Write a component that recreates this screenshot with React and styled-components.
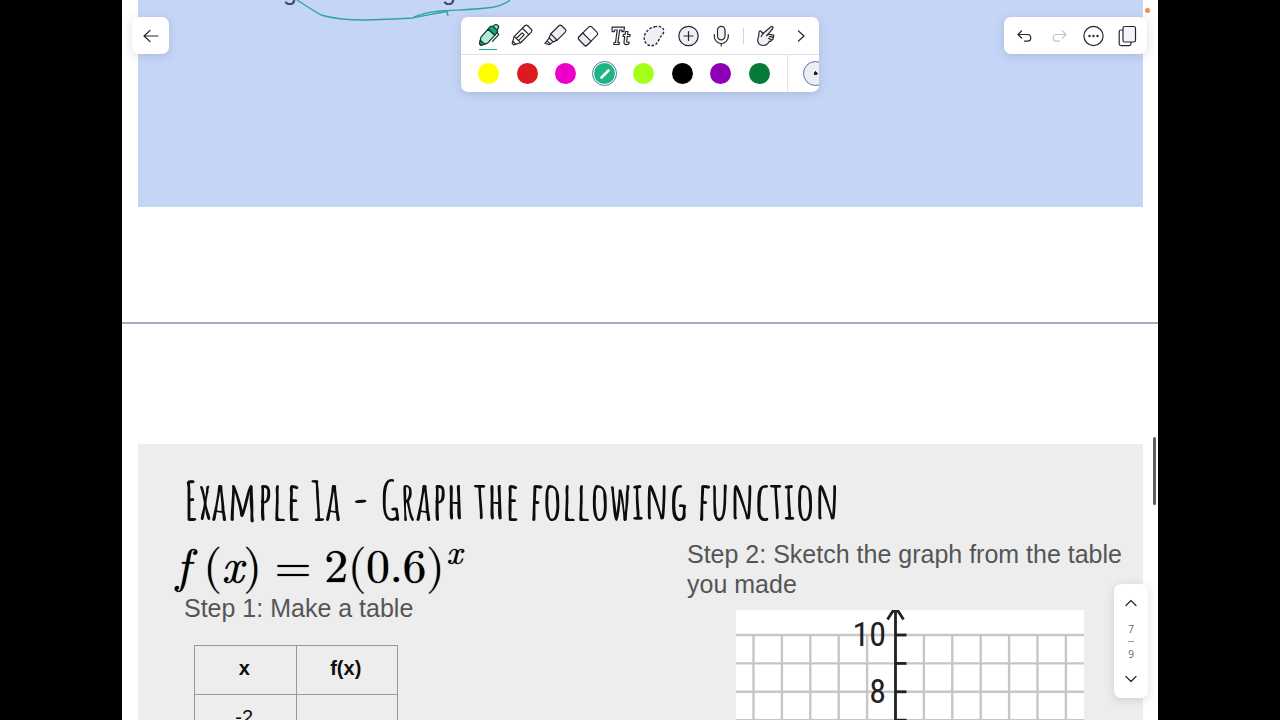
import styled, { createGlobalStyle, css } from "styled-components";

const swatches = [
  { name: "Yellow", color: "#ffff00" },
  { name: "Red", color: "#dc1a1f" },
  { name: "Magenta", color: "#ec00c8" },
  { name: "Teal", color: "#1fb485", selected: true },
  { name: "Lime", color: "#a4ff1a" },
  { name: "Black", color: "#000000" },
  { name: "Purple", color: "#8e00b8" },
  { name: "Green", color: "#067a36" },
];

const tools = [
  { name: "Pen", Icon: PenIcon, active: true },
  { name: "Pencil", Icon: PencilIcon },
  { name: "Highlighter", Icon: HighlighterIcon },
  { name: "Eraser", Icon: EraserIcon },
  { name: "Text", Icon: TextIcon },
  { name: "Lasso", Icon: LassoIcon },
  { name: "Add", Icon: AddIcon },
  { name: "Record", Icon: MicIcon },
];

export default function App() {
  return (
    <>
      <GlobalStyle />
      <Screen>
        <Stage>
          <PreviousSlide>
            <CutLine>
              <span>g</span>
              <span>g</span>
            </CutLine>
            <InkStroke />
          </PreviousSlide>
          <PageBreak />
          <ExampleSlide />
          <Toolbar />
          <BackButton type="button" aria-label="Back">
            <Icon>
              <path d="M19 12H5M11 6.500 5 12l6 5.500" />
            </Icon>
          </BackButton>
          <Actions />
          <Pager />
          <RecordingDot />
          <ScrollThumb />
        </Stage>
      </Screen>
    </>
  );
}

function ExampleSlide() {
  return (
    <Slide>
      <Title>Example 1a - Graph the following function</Title>
      <Columns>
        <div>
          <Formula>
            <i>f</i>
            <Group>
              <span>(</span>
              <i>x</i>
              <span>)</span>
            </Group>
            <span>=</span>
            <Group>
              <span>2(0.6)</span>
              <sup>x</sup>
            </Group>
          </Formula>
          <Step>Step 1: Make a table</Step>
          <ValueTable>
            <thead>
              <tr>
                <th>x</th>
                <th>f(x)</th>
              </tr>
            </thead>
            <tbody>
              <tr>
                <td>-2</td>
                <td></td>
              </tr>
            </tbody>
          </ValueTable>
        </div>
        <GraphColumn>
          <Step>Step 2: Sketch the graph from the table you made</Step>
          <Grid />
        </GraphColumn>
      </Columns>
    </Slide>
  );
}

function Grid() {
  const columns = [-5, -4, -3, -2, -1, 1, 2, 3, 4, 5, 6];
  const rows = [0, 1, 2, 3];
  const unit = 28.4;
  return (
    <Plot width="348" height="124" viewBox="0 0 348 124">
      <rect width="348" height="124" fill="#fff" />
      <g stroke="#c6c6c6" strokeWidth="2.4">
        {columns.map((c) => (
          <path key={c} d={`M${159.5 + c * unit} 25V124`} />
        ))}
        {rows.map((r) => (
          <path key={r} d={`M0 ${25 + r * unit}H348`} />
        ))}
      </g>
      <g stroke="#222" strokeWidth="2.8" fill="none">
        <path d="M159.5 1V124M151.500 9.500l3.500-5.500 2-3h5l2 3 3.500 5.500" />
        {rows.map((r) => (
          <path key={r} d={`M159.5 ${25 + r * unit}h11`} />
        ))}
      </g>
      <text x="150" y="36" textAnchor="end">
        10
      </text>
      <text x="150" y="93" textAnchor="end">
        8
      </text>
    </Plot>
  );
}

function Toolbar() {
  return (
    <ToolPanel>
      <ToolRow>
        <ToolGroup>
          {tools.map(({ name, Icon: ToolIcon, active }) => (
            <ToolButton key={name} type="button" aria-label={name} $active={active}>
              <ToolIcon />
            </ToolButton>
          ))}
        </ToolGroup>
        <Separator />
        <ToolButton type="button" aria-label="Gesture">
          <HandIcon />
        </ToolButton>
        <ToolButton type="button" aria-label="More tools">
          <Icon>
            <path d="M9.500 7 15 12l-5.500 5" />
          </Icon>
        </ToolButton>
      </ToolRow>
      <ColorRow>
        <ToolGroup>
          {swatches.map(({ name, color, selected }) => (
            <Swatch key={name} type="button" aria-label={name} $color={color} $selected={selected}>
              {selected && (
                <svg width="12" height="12" viewBox="0 0 12 12">
                  <path d="M2.500 9.500 9.500 2.500" stroke="#fff" strokeWidth="2.600" strokeLinecap="round" />
                </svg>
              )}
            </Swatch>
          ))}
        </ToolGroup>
        <SizeSlot>
          <SizeButton type="button" aria-label="Stroke size" />
        </SizeSlot>
      </ColorRow>
    </ToolPanel>
  );
}

function Actions() {
  return (
    <ActionPanel>
      <ToolButton type="button" aria-label="Undo">
        <Icon>
          <path d="M8.500 7 5 10.500l3.500 3.500M5.500 10.500H14.500a3.300 3.300 0 0 1 0 6.600h-3" />
        </Icon>
      </ToolButton>
      <ToolButton type="button" aria-label="Redo" disabled>
        <Icon stroke="#c4c4c6">
          <path d="M15.500 7l3.500 3.500-3.500 3.500M18.500 10.500H9.500a3.300 3.300 0 0 0 0 6.600h3" />
        </Icon>
      </ToolButton>
      <ToolButton type="button" aria-label="More">
        <Icon>
          <circle cx="12.500" cy="12" r="9.600" />
          <g fill="#222" stroke="none">
            <circle cx="8.500" cy="12" r="1.200" />
            <circle cx="12.500" cy="12" r="1.200" />
            <circle cx="16.500" cy="12" r="1.200" />
          </g>
        </Icon>
      </ToolButton>
      <ToolButton type="button" aria-label="Pages">
        <Icon>
          <path d="M8 6H6a1.800 1.800 0 0 0-1.800 1.800v12A1.800 1.800 0 0 0 6 21.600h8.200a1.800 1.800 0 0 0 1.800-1.800V18" />
          <rect x="8" y="2.500" width="12.500" height="15.500" rx="1.800" fill="#f4f5f8" />
        </Icon>
      </ToolButton>
    </ActionPanel>
  );
}

function Pager() {
  return (
    <PagerPanel>
      <ToolButton type="button" aria-label="Previous page">
        <Icon>
          <path d="M7 14.500 12 9.500l5 5" />
        </Icon>
      </ToolButton>
      <PageCount>
        <span>7</span>
        <PageRule />
        <span>9</span>
      </PageCount>
      <ToolButton type="button" aria-label="Next page">
        <Icon>
          <path d="M7 9.500 12 14.500l5-5" />
        </Icon>
      </ToolButton>
    </PagerPanel>
  );
}

function InkStroke() {
  return (
    <Ink width="230" height="24" viewBox="290 0 230 24">
      <path d="M297 0C305 5 312 10 321 15C334 19 350 20 365 20C385 19.500 400 19 412 18C425 16 436 13 447 11.500L448 16" />
      <path d="M414 17C424 13 436 10.500 449 10.500C468 9.500 483 9 494 7C502 5 507 3 510 0" />
    </Ink>
  );
}

function Icon({ children, stroke = "#26282c" }) {
  return (
    <svg
      width="24"
      height="24"
      viewBox="0 0 24 24"
      fill="none"
      stroke={stroke}
      strokeWidth="1.200"
      strokeLinecap="round"
      strokeLinejoin="round"
      overflow="visible"
    >
      {children}
    </svg>
  );
}

function PenIcon() {
  return (
    <Icon stroke="#0d3b2c">
      <g transform="rotate(42 12 12)">
        <path d="M9.500 1.500V0a2.500 2.500 0 0 1 5 0v1.500" fill="#8fdcc0" />
        <path d="M7.500 7V3.500a2 2 0 0 1 2-2h5a2 2 0 0 1 2 2V7z" fill="#1ea377" />
        <path d="M7.500 7h9v10.500l-3.500 6h-2l-3.500-6z" fill="#b5ead5" />
        <path d="M9 20.200h6L13 23.500h-2z" fill="#1ea377" />
        <path d="M16.500 3.500H19V13" />
      </g>
    </Icon>
  );
}

function PencilIcon() {
  return (
    <Icon>
      <g transform="rotate(45 12 12)">
        <path d="M7.500 17V2a2 2 0 0 1 2-2h5a2 2 0 0 1 2 2v15L13 23.500h-2z" fill="#fff" />
        <path d="M7.500 5.500h9M7.500 17h9M10.500 9v8M13.500 9v8M10.500 9h3M10 21.500h4" />
      </g>
    </Icon>
  );
}

function HighlighterIcon() {
  return (
    <Icon>
      <g transform="rotate(45 12 12)">
        <path d="M7.500 13V2a2 2 0 0 1 2-2h5a2 2 0 0 1 2 2v11l-1.500 4.500H9z" fill="#eef0f5" />
        <path d="M7.500 13.500h9M9.500 17.500V21h5v-3.500M10 21v3.200l4-2V21" />
      </g>
    </Icon>
  );
}

function EraserIcon() {
  return (
    <Icon>
      <g transform="rotate(45 12 12)">
        <rect x="6.200" y="3" width="11.600" height="18" rx="2" fill="#fff" />
        <path d="M6.200 13.500h11.600V19a2 2 0 0 1-2 2H8.200a2 2 0 0 1-2-2z" fill="#e9ebf2" />
      </g>
    </Icon>
  );
}

function TextIcon() {
  return (
    <Icon>
      <path
        d="M3 3.200h12.500l-.7 4.500h-2l.2-1.700h-2.300L8.900 18.500h1.500l-.3 2H4.800l.3-2h1.400L8.200 6H5.700L5.200 7.700h-2z"
        fill="#f4f5f8"
      />
      <path
        d="M16.500 7.500H19l-.4 3h2.500l-.3 2h-2.500l-.6 4.800c-.1.900.7 1.200 2.400.7l-.2 2c-3 1.300-5.200.3-4.900-2l.7-5.500H14l.3-2h1.800z"
        fill="#f4f5f8"
      />
    </Icon>
  );
}

function LassoIcon() {
  return (
    <Icon>
      <path
        d="M12.500 2.800C17 1.500 21.800 3 21.800 7c0 3.500-3.500 4.800-4.800 8.500-1.200 3.500-3.500 6.200-7.500 6.200-4.500 0-7.500-3.500-7.300-8.200.2-5 5-9.500 10.300-10.700z"
        fill="#eef0f5"
        strokeDasharray="2.600 1.600"
        strokeLinecap="butt"
        strokeWidth="1.400"
      />
    </Icon>
  );
}

function AddIcon() {
  return (
    <Icon>
      <circle cx="12.500" cy="12" r="9.700" fill="#eef0f5" />
      <path d="M12.500 7.500v9M8 12h9" />
    </Icon>
  );
}

function MicIcon() {
  return (
    <Icon>
      <rect x="8.500" y="2.300" width="7.500" height="13.500" rx="3.700" fill="#eef0f5" />
      <path d="M5.300 10.500v2a7 7 0 0 0 14 0v-2M12.300 19.500v2.500" />
    </Icon>
  );
}

function HandIcon() {
  return (
    <Icon>
      <path
        d="M9 9.500 17 2.800c1.300-.9 2.600.5 1.700 1.700L14 10.300l4.800.6c1.500.3 1.400 2.200 0 2.300l.3 1.200c.3 1.400-1.100 1.900-2 1.300.4 1.300-.7 2.200-1.800 1.600-1.300 2.700-3.700 4.300-6.400 4.200-3.500-.2-5.700-3-5.100-6.200.3-1.800 1.100-3 1.100-5l.2-2.300c.3-1.500 2.200-1.400 2.500 0z"
        fill="#f1f2f6"
      />
      <path d="M9 9.500 7.200 12.500M14 10.300l-1.500 1.400M18.800 13.200l-3.300-.5M17.100 15.700l-2.500-1.400" />
    </Icon>
  );
}

const GlobalStyle = createGlobalStyle`
  * {
    box-sizing: border-box;
  }

  body {
    margin: 0;
    background: #000;
    font-family: "Liberation Sans", Arial, sans-serif;
  }

  button {
    padding: 0;
    border: 0;
    background: none;
    font: inherit;
  }
`;

const Screen = styled.div`
  height: 100vh;
  padding: 0 122px;
  background: #000;
`;

const Stage = styled.main`
  position: relative;
  height: 100%;
  padding: 0 15px 0 16px;
  overflow: hidden;
  background: #fff;
`;

const PreviousSlide = styled.section`
  position: relative;
  height: 207px;
  background: #c5d5f6;
  overflow: hidden;
`;

const CutLine = styled.div`
  display: flex;
  gap: 145px;
  margin-top: -24px;
  padding-left: 145px;
  font-size: 25px;
  line-height: 30px;
  color: #45485c;
`;

const Ink = styled.svg`
  position: absolute;
  top: 0;
  left: 152px;
  fill: none;
  stroke: #2ba79f;
  stroke-width: 1.4;
`;

const PageBreak = styled.hr`
  height: 2px;
  margin: 115px -15px 120px -16px;
  border: 0;
  background: #a9a9cb;
`;

const Slide = styled.section`
  padding: 28px 0 0 46px;
  background: #ededed;
`;

const Title = styled.h1`
  margin: 0;
  font-family: "Amatic SC", "Liberation Sans Narrow", sans-serif;
  font-size: 53px;
  line-height: 56px;
  font-weight: 700;
  white-space: nowrap;
  color: #0d0d0d;
`;

const Columns = styled.div`
  display: grid;
  grid-template-columns: 503px 1fr;
`;

const Formula = styled.div`
  display: flex;
  align-items: baseline;
  gap: 13px;
  height: 65px;
  margin-left: -8px;
  padding-top: 9px;
  font-family: "KaTeX_Main", "MathJax_Main", "Latin Modern Math", "Latin Modern Roman", "CMU Serif", "Liberation Serif", serif;
  font-size: 47px;
  line-height: 52px;
  color: #000;
  text-shadow: 0 0 1px #000;

  i,
  sup {
    font-family: "KaTeX_Math", "MathJax_Math", "Latin Modern Roman", "CMU Serif", "Liberation Serif", serif;
    font-style: italic;
  }
`;

const Group = styled.span`
  display: flex;
  align-items: baseline;

  sup {
    align-self: flex-start;
    padding-left: 2px;
    font-size: 34px;
    line-height: 16px;
  }
`;

const Step = styled.p`
  margin: 0;
  font-size: 25px;
  line-height: 30px;
  color: #555;
`;

const ValueTable = styled.table`
  width: 204px;
  margin: 22px 0 0 10px;
  border-collapse: collapse;
  table-layout: fixed;
  font-size: 20px;
  line-height: 24px;
  text-align: center;
  color: #0d0d0d;

  th,
  td {
    height: 49px;
    padding: 0 2px 4px 0;
    border: 1px solid #999;
  }
`;

const GraphColumn = styled.div`
  padding-top: 11px;
`;

const Plot = styled.svg`
  display: block;
  margin: 11px 0 0 49px;

  text {
    font-family: "Roboto Condensed", "Liberation Sans Narrow", "Liberation Sans", sans-serif;
    font-size: 34px;
    fill: #222;
  }
`;

const floating = css`
  position: absolute;
  background: #fff;
  border-radius: 7px;
  box-shadow: 0 2px 10px rgba(40, 50, 90, 0.16);
`;

const BackButton = styled.button`
  ${floating}
  top: 17px;
  left: 10px;
  display: grid;
  place-items: center;
  width: 37px;
  height: 37px;
`;

const ToolPanel = styled.div`
  ${floating}
  top: 17px;
  left: 50%;
  width: 358px;
  transform: translateX(-50%);
`;

const ToolRow = styled.div`
  display: flex;
  align-items: center;
  gap: 9px;
  height: 38px;
  padding: 0 5px 0 14px;
  border-bottom: 1px solid #e0e1e4;
`;

const ColorRow = styled.div`
  display: flex;
  gap: 15px;
  height: 37px;
  padding-left: 15px;
`;

const ToolGroup = styled.div`
  display: flex;
  flex: 1;
  align-items: center;
  justify-content: space-between;
`;

const ToolButton = styled.button`
  position: relative;
  display: grid;
  place-items: center;
  width: 26px;
  height: 26px;

  ${({ $active }) =>
    $active &&
    css`
      &::after {
        content: "";
        position: absolute;
        right: 4px;
        bottom: -1px;
        left: 4px;
        height: 1px;
        background: #1fa57c;
      }
    `}
`;

const Separator = styled.span`
  width: 1px;
  height: 16px;
  background: #d5d6da;
`;

const Swatch = styled.button`
  display: grid;
  place-items: center;
  width: 25px;
  height: 25px;
  border: ${({ $selected }) => ($selected ? "1px solid #4a7d9f" : "2px solid transparent")};
  border-radius: 50%;
  padding: ${({ $selected }) => ($selected ? "1px" : "0")};
  background: ${({ $color }) => $color} content-box;
`;

const SizeSlot = styled.div`
  width: 32px;
  padding: 6px 0 0 15px;
  border-left: 1px solid #e0e1e4;
  border-radius: 0 0 7px 0;
  overflow: hidden;
`;

const SizeButton = styled.button`
  width: 25px;
  height: 25px;
  border: 1px solid #5273b5;
  border-radius: 50%;
  background: radial-gradient(circle, #222 2px, #eceef2 2px);
`;

const ActionPanel = styled.div`
  ${floating}
  top: 17px;
  right: 11px;
  display: flex;
  align-items: center;
  justify-content: space-between;
  width: 143px;
  height: 37px;
  padding: 0 7px 0 8px;
`;

const PagerPanel = styled.nav`
  ${floating}
  right: 10px;
  bottom: 22px;
  display: flex;
  flex-direction: column;
  align-items: center;
  justify-content: space-between;
  width: 34px;
  height: 114px;
  padding: 6px 0;
`;

const PageCount = styled.div`
  display: flex;
  flex-direction: column;
  align-items: center;
  gap: 6px;
  font-family: "Open Sans", sans-serif;
  font-size: 10px;
  line-height: 12px;
  color: #666;
`;

const PageRule = styled.span`
  width: 6px;
  height: 1px;
  background: #999;
`;

const RecordingDot = styled.span`
  position: absolute;
  top: 8px;
  right: 8px;
  width: 5px;
  height: 5px;
  border-radius: 50%;
  background: #e8904c;
`;

const ScrollThumb = styled.span`
  position: absolute;
  top: 437px;
  right: 2px;
  width: 3px;
  height: 68px;
  border-radius: 2px;
  background: #606062;
`;
